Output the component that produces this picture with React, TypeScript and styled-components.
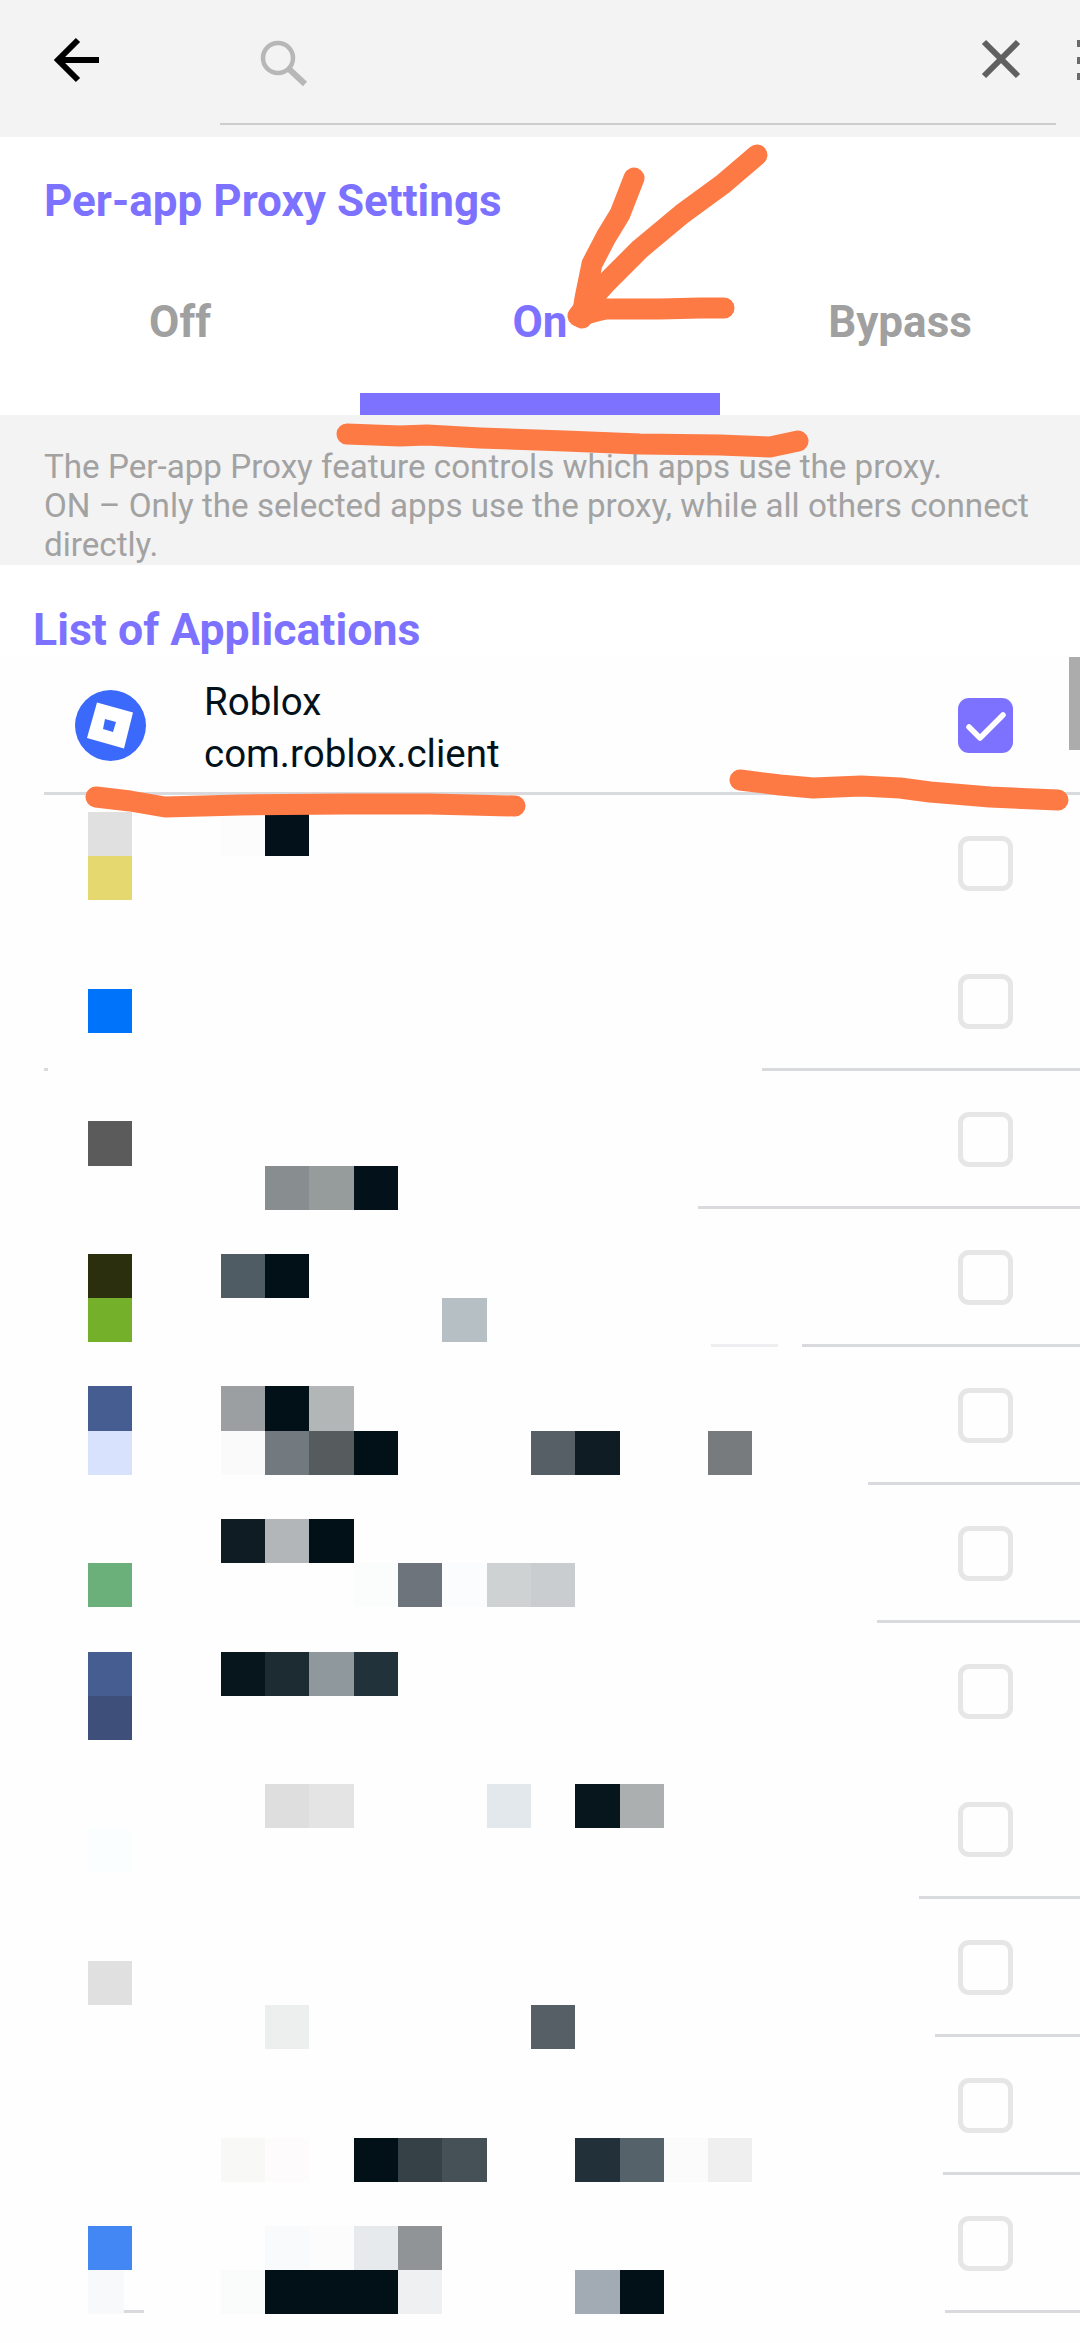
import React from "react";
import styled, { createGlobalStyle } from "styled-components";

const Global = createGlobalStyle`
  html, body { margin: 0; padding: 0; background: #fff; }
  body { font-family: Roboto, "Liberation Sans", sans-serif; }
  #root { width: 1080px; height: 2343px; overflow: hidden; }
`;

const Page = styled.div`
  position: relative;
  width: 1080px;
  height: 2343px;
  overflow: hidden;
  background: #fefefe;
`;

const Header = styled.header`
  height: 137px;
  box-sizing: border-box;
  background: #f3f3f3;
  display: flex;
  align-items: flex-start;
`;
const BackSlot = styled.div`
  width: 220px;
  flex: none;
  padding: 37px 0 0 54px;
  box-sizing: border-box;
  display: flex;
`;
const SearchField = styled.div`
  width: 836px;
  flex: none;
  height: 125px;
  box-sizing: border-box;
  border-bottom: 2px solid #cdcdcd;
  display: flex;
  justify-content: space-between;
  align-items: flex-start;
  padding: 37px 33px 0 40px;
`;
const MenuSlot = styled.div`
  flex: 1;
  display: flex;
  justify-content: flex-end;
  padding-top: 40px;
`;
const Glyph = styled.svg`
  display: block;
  flex: none;
`;

const SettingsCard = styled.section`
  background: #fff;
`;
const Heading = styled.h2<{ $inset: number; $size: number }>`
  margin: 0;
  padding-left: ${(p) => p.$inset}px;
  font-size: ${(p) => p.$size}px;
  line-height: 48px;
  font-weight: 700;
  color: #7d72ff;
`;
const TitleBlock = styled.div`
  padding: 40px 0 24px;
`;
const Tabs = styled.div`
  display: flex;
`;
const Tab = styled.div<{ $active?: boolean }>`
  width: 360px;
  height: 166px;
  box-sizing: border-box;
  padding-top: 49px;
  text-align: center;
  font-size: 44px;
  line-height: 48px;
  font-weight: 700;
  color: ${(p) => (p.$active ? "#7d72ff" : "#a0a0a0")};
  border-bottom: 22px solid ${(p) => (p.$active ? "#7d72ff" : "transparent")};
`;
const Info = styled.div`
  background: #f3f3f3;
  height: 150px;
  box-sizing: border-box;
  padding: 32px 44px 0;
  font-size: 33.2px;
  line-height: 39px;
  color: #a2a2a2;
`;
const ListHead = styled.div`
  padding-top: 41px;
  height: 92px;
  box-sizing: border-box;
  background: #fff;
`;
const List = styled.div`
  position: relative;
`;
const Row = styled.div`
  display: flex;
  flex-direction: column;
`;
const RowBody = styled.div`
  height: 135px;
  box-sizing: border-box;
  display: flex;
  align-items: center;
  padding: 2px 67px 0 75px;
`;
const AppText = styled.div`
  flex: 1;
  margin-left: 58px;
  padding-top: 4px;
  font-size: 38.5px;
  line-height: 52px;
  color: #03121a;
`;
const Check = styled.div<{ $on?: boolean }>`
  width: 55px;
  height: 55px;
  box-sizing: border-box;
  border-radius: 11px;
  background: ${(p) => (p.$on ? "#7d72ff" : "transparent")};
  border: ${(p) => (p.$on ? "0" : "5px solid #e6e6e6")};
  flex: none;
`;
const IconGap = styled.div`
  width: 71px;
  flex: none;
`;
const RuleTrack = styled.div`
  height: 3px;
  display: flex;
`;
const RuleSegment = styled.div<{ $from: number; $width?: number; $faint?: boolean }>`
  margin-left: ${(p) => p.$from}px;
  height: 3px;
  background: ${(p) => (p.$faint ? "#eeeef0" : "#d9dade")};
  ${(p) => (p.$width ? `width: ${p.$width}px;` : "flex: 1;")}
`;
const Scrollbar = styled.div`
  position: absolute;
  top: 0;
  right: 0;
  width: 11px;
  height: 93px;
  background: #acacac;
`;
const Mosaic = styled.div`
  position: absolute;
  left: 88px;
  top: 155px;
  display: grid;
  grid-template-columns: repeat(16, 44.3px);
  grid-template-rows: repeat(34, 44.2px);
`;
const Tile = styled.div<{ $col: number; $row: number; $color: string; $width?: number }>`
  grid-column: ${(p) => p.$col + 1};
  grid-row: ${(p) => p.$row + 1};
  background: ${(p) => p.$color};
  width: ${(p) => (p.$width ? `${p.$width}px` : "auto")};
`;
const Scribbles = styled.svg`
  position: absolute;
  left: 0;
  top: 0;
  pointer-events: none;
`;

type Seg = [number, number?, boolean?];
const rules: Seg[][] = [
  [[44]],
  [],
  [[44, 4], [714]],
  [[698]],
  [[711, 67, true], [24]],
  [[868]],
  [[877]],
  [],
  [[919]],
  [[935]],
  [[943]],
  [[124, 20], [801]],
];

const tiles: [number, number, string, number?][] = [
  [0, 0, "#e0e0e0"], [0, 1, "#e5d86f"], [3, 0, "#fcfcfc"], [4, 0, "#03121a"],
  [0, 4, "#0073fb"],
  [0, 7, "#5b5b5b"], [4, 8, "#888e90"], [5, 8, "#969b9c"], [6, 8, "#03111a"],
  [0, 10, "#2b2f0d"], [0, 11, "#74b02a"], [3, 10, "#505c64"], [4, 10, "#021017"], [8, 11, "#b6bfc3"],
  [0, 13, "#465d92"], [0, 14, "#d9e2fd"], [3, 13, "#9c9fa1"], [4, 13, "#021017"], [5, 13, "#b2b6b6"],
  [3, 14, "#fafafa"], [4, 14, "#727a7f"], [5, 14, "#565c5e"], [6, 14, "#021017"],
  [10, 14, "#565f65"], [11, 14, "#0f1c24"], [14, 14, "#777b7d"],
  [3, 16, "#0f1c24"], [4, 16, "#b3b6b8"], [5, 16, "#021017"],
  [0, 17, "#6bb07b"], [6, 17, "#fbfdfd"], [7, 17, "#6d747b"], [8, 17, "#fbfcfe"], [9, 17, "#cfd2d3"], [10, 17, "#cacdd0"],
  [0, 19, "#465d92"], [0, 20, "#3e5079"], [3, 19, "#07151d"], [4, 19, "#1d2b33"], [5, 19, "#8f989c"], [6, 19, "#22323a"],
  [4, 22, "#dedede"], [5, 22, "#e4e4e4"], [9, 22, "#e3e8ec"], [11, 22, "#07151c"], [12, 22, "#abafb0"], [0, 23, "#fbfeff"],
  [0, 26, "#e0e0e0"], [4, 27, "#edefee"], [10, 27, "#565f65"],
  [3, 30, "#f8f8f7"], [4, 30, "#fdfbfc"], [6, 30, "#021017"], [7, 30, "#354146"], [8, 30, "#465157"],
  [11, 30, "#22303a"], [12, 30, "#55626a"], [13, 30, "#fbfbfb"], [14, 30, "#efefef"],
  [0, 32, "#4387f5"], [4, 32, "#f9fafc"], [5, 32, "#fcfcfc"], [6, 32, "#e6eaed"], [7, 32, "#909496"],
  [0, 33, "#f8f9fb", 36], [3, 33, "#fafbfb"], [4, 33, "#021017"], [5, 33, "#021017"], [6, 33, "#021017"], [7, 33, "#eff0f2"],
  [11, 33, "#a2abb3"], [12, 33, "#021017"],
];

const strokes = [
  "M757 155 L723 184 L682 214 L640 249 L606 283 L589 302 L578 316",
  "M634 178 L620 214 L606 237 L592 264 L585 298 L582 318",
  "M582 316 Q590 312 606 309 L660 309 L700 308 L724 308",
  "M347 434 L400 436 L427 435 L480 438 L565 441 L640 444 L720 445 L770 447 L798 441",
  "M96 797 L130 801 L165 807 L240 805 L344 804 L430 804 L515 806",
  "M740 780 L780 785 L813 788 L861 786 L900 788 L930 792 L990 797 L1058 800",
];

export default function App() {
  return (
    <Page>
      <Global />
      <Header>
        <BackSlot>
          <Glyph width="48" height="46" viewBox="0 0 48 46" fill="none" stroke="#000" strokeWidth="6">
            <path d="M24 3 L4 23 L24 43" />
            <path d="M4 23 H45" />
          </Glyph>
        </BackSlot>
        <SearchField>
          <Glyph width="50" height="50" viewBox="0 0 50 50" fill="none" stroke="#b7b7b7">
            <circle cx="18" cy="21" r="15" strokeWidth="4.5" />
            <path d="M29 32 L45 47" strokeWidth="6" />
          </Glyph>
          <Glyph width="42" height="42" viewBox="0 0 42 42" fill="none" stroke="#606060" strokeWidth="6">
            <path d="M3 5 L37 39 M37 5 L3 39" />
          </Glyph>
        </SearchField>
        <MenuSlot>
          <Glyph width="3" height="40" viewBox="0 0 3 40" fill="#6a6a6a">
            <rect y="0" width="3" height="7" />
            <rect y="17" width="3" height="7" />
            <rect y="33" width="3" height="7" />
          </Glyph>
        </MenuSlot>
      </Header>

      <SettingsCard>
        <TitleBlock>
          <Heading $inset={44} $size={44}>Per-app Proxy Settings</Heading>
        </TitleBlock>
        <Tabs>
          <Tab>Off</Tab>
          <Tab $active>On</Tab>
          <Tab>Bypass</Tab>
        </Tabs>
      </SettingsCard>

      <Info>
        The Per-app Proxy feature controls which apps use the proxy.
        <br />
        ON – Only the selected apps use the proxy, while all others connect directly.
      </Info>

      <ListHead>
        <Heading $inset={33} $size={44.6}>List of Applications</Heading>
      </ListHead>

      <List>
        {rules.map((segs, i) => (
          <Row key={i}>
            <RowBody>
              {i === 0 ? (
                <Glyph width="71" height="71" viewBox="0 0 71 71">
                  <circle cx="35.5" cy="35.5" r="35.5" fill="#3b69fb" />
                  <path
                    fillRule="evenodd"
                    fill="#fff"
                    d="M22 12.5 L58 22.5 L49 58.5 L12 48 Z M30 29 L28 39 L38 42 L41 32 Z"
                  />
                </Glyph>
              ) : (
                <IconGap />
              )}
              <AppText>
                {i === 0 && (
                  <>
                    Roblox
                    <br />
                    com.roblox.client
                  </>
                )}
              </AppText>
              <Check $on={i === 0}>
                {i === 0 && (
                  <Glyph width="55" height="55" viewBox="0 0 55 55" fill="none" stroke="#fff" strokeWidth="5.5" strokeLinecap="round" strokeLinejoin="round">
                    <path d="M11 29 L22 40 L45 17" />
                  </Glyph>
                )}
              </Check>
            </RowBody>
            <RuleTrack>
              {segs.map(([from, width, faint], j) => (
                <RuleSegment key={j} $from={from} $width={width} $faint={faint} />
              ))}
            </RuleTrack>
          </Row>
        ))}
        <Mosaic>
          {tiles.map(([col, row, color, width], i) => (
            <Tile key={i} $col={col} $row={row} $color={color} $width={width} />
          ))}
        </Mosaic>
        <Scrollbar />
      </List>

      <Scribbles width="1080" height="2343" viewBox="0 0 1080 2343" fill="none" stroke="#fd7a45" strokeWidth="21" strokeLinecap="round" strokeLinejoin="round">
        {strokes.map((d, i) => (
          <path key={i} d={d} />
        ))}
      </Scribbles>
    </Page>
  );
}
